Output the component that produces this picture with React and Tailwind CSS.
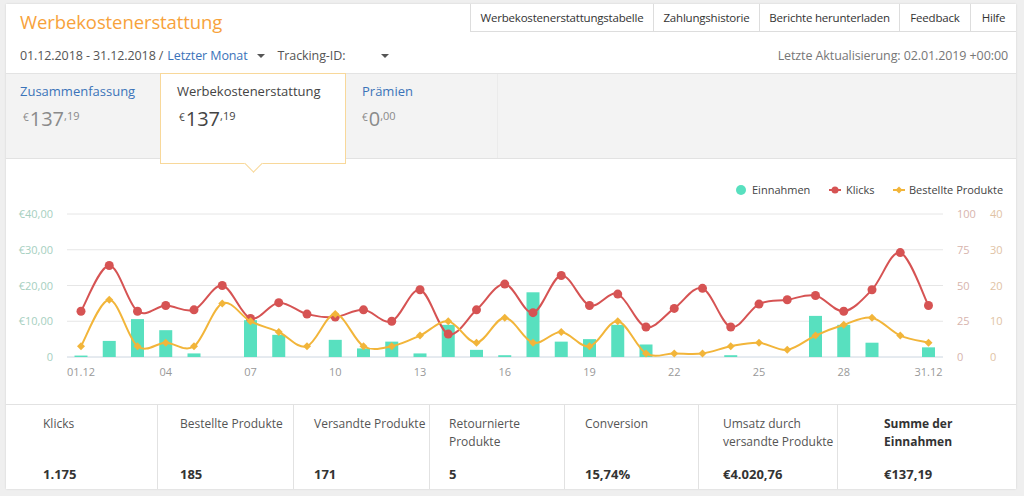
const klicks = [32, 64, 32, 36, 33, 50, 27, 38, 30, 28, 33, 25, 47, 16, 33, 51, 31, 57, 36, 44, 21, 34, 48, 21, 37, 40, 43, 32, 47, 73, 36];
const bestellt = [3, 16, 3, 4, 3, 15, 10, 7, 3, 12, 3, 3, 6, 10, 4, 11, 4, 7, 3, 10, 1, 1, 1, 3, 4, 2, 6, 9, 11, 6, 4];
const einnahmen = [0.4, 4.5, 10.6, 7.5, 1.0, 0, 10.3, 6.2, 0, 4.8, 2.4, 4.3, 1.0, 9.0, 2.0, 0.5, 18.1, 4.3, 5.0, 9.0, 3.5, 0, 0, 0.5, 0, 0, 11.5, 9.0, 4.0, 0, 2.7];

const BASE = 198;
const H = 143;
const dayX = (i) => 75 + i * 28.25;

function spline(pts) {
  let d = `M${pts[0][0]},${pts[0][1]}`;
  for (let i = 0; i < pts.length - 1; i++) {
    const p0 = pts[i - 1] || pts[i];
    const p1 = pts[i];
    const p2 = pts[i + 1];
    const p3 = pts[i + 2] || p2;
    const c1x = p1[0] + (p2[0] - p0[0]) / 6;
    const c1y = p1[1] + (p2[1] - p0[1]) / 6;
    const c2x = p2[0] - (p3[0] - p1[0]) / 6;
    const c2y = p2[1] - (p3[1] - p1[1]) / 6;
    d += ` C${c1x},${c1y} ${c2x},${c2y} ${p2[0]},${p2[1]}`;
  }
  return d;
}

const Chart = () => {
  const kPts = klicks.map((v, i) => [dayX(i), BASE - (v / 100) * H]);
  const bPts = bestellt.map((v, i) => [dayX(i), BASE - (v / 40) * H]);
  const grid = [0, 1, 2, 3, 4].map((k) => BASE - k * (H / 4));
  const leftLabels = ["0", "€10,00", "€20,00", "€30,00", "€40,00"];
  const rightA = ["0", "25", "50", "75", "100"];
  const rightB = ["0", "10", "20", "30", "40"];
  const xLabels = [
    [0, "01.12"], [3, "04"], [6, "07"], [9, "10"], [12, "13"], [15, "16"],
    [18, "19"], [21, "22"], [24, "25"], [27, "28"], [30, "31.12"],
  ];

  return (
    <svg width="1010" height="245" className="block" style={{ fontFamily: "'Open Sans', sans-serif" }}>
      {/* legend */}
      <circle cx="735" cy="31" r="5" fill="#58e0bf" />
      <text x="746" y="35" fontSize="11" fill="#444">Einnahmen</text>
      <line x1="823" y1="31" x2="835" y2="31" stroke="#d65353" strokeWidth="2" />
      <circle cx="829" cy="31" r="3.5" fill="#d65353" />
      <text x="840" y="35" fontSize="11" fill="#444">Klicks</text>
      <line x1="887" y1="31" x2="899" y2="31" stroke="#f2b53a" strokeWidth="2" />
      <path d="M893,27.5 L896.5,31 L893,34.5 L889.5,31 Z" fill="#f2b53a" />
      <text x="903" y="35" fontSize="11" fill="#444">Bestellte Produkte</text>

      {grid.map((y, k) => (
        <g key={k}>
          <line x1="61" x2="937" y1={y} y2={y} stroke={k === 0 ? "#ccd6e0" : "#e6e6e6"} strokeWidth="1" />
          <text x="47" y={y + 4} fontSize="11" textAnchor="end" fill="#a6cfc0">{leftLabels[k]}</text>
          <text x="951" y={y + 4} fontSize="11" fill="#d7b4ad">{rightA[k]}</text>
          <text x="984" y={y + 4} fontSize="11" fill="#dfc3a5">{rightB[k]}</text>
        </g>
      ))}

      {einnahmen.map((v, i) =>
        v > 0 ? (
          <rect key={i} x={dayX(i) - 6.5} y={BASE - v * (H / 40)} width="13" height={v * (H / 40)} fill="#58e0bf" />
        ) : null
      )}

      <path d={spline(kPts)} fill="none" stroke="#d65353" strokeWidth="2" />
      {kPts.map(([x, y], i) => (
        <circle key={i} cx={x} cy={y} r="4.5" fill="#d65353" />
      ))}

      <path d={spline(bPts)} fill="none" stroke="#f2b53a" strokeWidth="2" />
      {bPts.map(([x, y], i) => (
        <path key={i} d={`M${x},${y - 4} L${x + 4},${y} L${x},${y + 4} L${x - 4},${y} Z`} fill="#f2b53a" />
      ))}

      {xLabels.map(([i, t]) => (
        <text key={t} x={dayX(i)} y="217" fontSize="11" textAnchor="middle" fill="#999">{t}</text>
      ))}
    </svg>
  );
};

const Caret = () => (
  <span className="inline-block w-0 h-0 border-l-[4px] border-r-[4px] border-t-[4px] border-l-transparent border-r-transparent border-t-[#555]" />
);

const Amount = ({ big, cents, dark }) => (
  <div className={`flex items-start ${dark ? "text-[#444]" : "text-[#8a8a8a]"}`}>
    <span className="text-[10px] leading-none mt-[3px] mr-[1px]">€</span>
    <span className="text-[20px] leading-none">{big}</span>
    <span className="text-[11px] leading-none mt-[1px]">,{cents}</span>
  </div>
);

const stats = [
  { w: "w-[152px]", pl: "pl-[37px]", label: "Klicks", value: "1.175" },
  { w: "w-[136px]", pl: "pl-[22px]", label: "Bestellte Produkte", value: "185" },
  { w: "w-[136px]", pl: "pl-[20px]", label: "Versandte Produkte", value: "171" },
  { w: "w-[135px]", pl: "pl-[19px]", label: ["Retournierte", "Produkte"], value: "5" },
  { w: "w-[134px]", pl: "pl-[20px]", label: "Conversion", value: "15,74%" },
  { w: "w-[139px]", pl: "pl-[24px]", label: ["Umsatz durch", "versandte Produkte"], value: "€4.020,76" },
  { w: "w-[178px]", pl: "pl-[46px]", label: ["Summe der", "Einnahmen"], value: "€137,19", bold: true },
];

export default function App() {
  return (
    <div className="min-h-screen bg-[#efefef] pt-[4px] pl-[6px]" style={{ fontFamily: "'Open Sans', sans-serif" }}>
      <div className="w-[1010px] h-[485px] bg-white shadow-[0_0_2px_rgba(0,0,0,0.12)] flex flex-col overflow-hidden">
        {/* header */}
        <div className="border-b border-[#e3e3e3] pb-[2px]">
          <div className="flex h-[28px]">
            <div className="pl-[14px] pt-[5px] text-[18.5px] leading-[26px] tracking-[-0.1px] text-[#f7a23b] flex-1">Werbekostenerstattung</div>
            <div className="flex text-[11.5px] tracking-[-0.2px] text-[#333]">
              {[
                ["Werbekostenerstattungstabelle", "w-[183px]"],
                ["Zahlungshistorie", "w-[106px]"],
                ["Berichte herunterladen", "w-[140px]"],
                ["Feedback", "w-[71px]"],
                ["Hilfe", "w-[46px]"],
              ].map(([t, w]) => (
                <div key={t} className={`${w} h-[28px] flex items-center justify-center border-l border-b border-[#dddddd]`}>
                  {t}
                </div>
              ))}
            </div>
          </div>
          <div className="mt-[9px] h-[30px] flex items-center pl-[14px] pr-[8px] text-[12.5px] tracking-[-0.1px] text-[#555]">
            <span>01.12.2018 - 31.12.2018 / </span>
            <span className="text-[#3b73b9] ml-[4px]">Letzter Monat</span>
            <span className="ml-[9px] flex"><Caret /></span>
            <span className="ml-[13px]">Tracking-ID:</span>
            <span className="ml-[36px] flex"><Caret /></span>
            <span className="flex-1" />
            <span className="text-[12.5px] text-[#777]">Letzte Aktualisierung: 02.01.2019 +00:00</span>
          </div>
        </div>

        {/* tabs band */}
        <div className="h-[85px] shrink-0 bg-[#f3f3f3] border-b border-[#e2e2e2] flex items-start">
          <div className="w-[154px] pl-[14px] pt-[8px]">
            <div className="text-[13px] leading-[18px] text-[#3b73b9]">Zusammenfassung</div>
            <div className="mt-[9px] pl-[3px]"><Amount big="137" cents="19" /></div>
          </div>
          <div className="relative z-10 -mt-px w-[186px] h-[91px] bg-white border border-[#f8d89a] pl-[16px] pt-[8px]">
            <div className="text-[13px] leading-[18px] text-[#444]">Werbekostenerstattung</div>
            <div className="mt-[9px] pl-[2px]"><Amount big="137" cents="19" dark /></div>
            <div className="absolute left-[86px] -bottom-[7px] w-[13px] h-[13px] bg-white border-r border-b border-[#f8d89a] rotate-45" />
          </div>
          <div className="w-[152px] h-full pl-[16px] pt-[8px] border-r border-[#ebebeb]">
            <div className="text-[13px] leading-[18px] text-[#3b73b9]">Prämien</div>
            <div className="mt-[9px]"><Amount big="0" cents="00" /></div>
          </div>
        </div>

        {/* chart */}
        <div className="shrink-0">
          <Chart />
        </div>

        {/* stats */}
        <div className="flex flex-1 border-t border-[#e2e2e2]">
          {stats.map((s, i) => (
            <div key={i} className={`${s.w} ${s.pl} pt-[10px] ${i < stats.length - 1 ? "border-r border-[#e2e2e2]" : ""} flex flex-col`}>
              <div className={`text-[12px] leading-[18px] h-[36px] ${s.bold ? "font-bold text-[#333]" : "text-[#555]"}`}>
                {Array.isArray(s.label) ? (
                  <>
                    {s.label[0]}
                    <br />
                    {s.label[1]}
                  </>
                ) : (
                  s.label
                )}
              </div>
              <div className="mt-[14px] text-[13px] font-bold text-[#333]">{s.value}</div>
            </div>
          ))}
        </div>
      </div>
    </div>
  );
}
